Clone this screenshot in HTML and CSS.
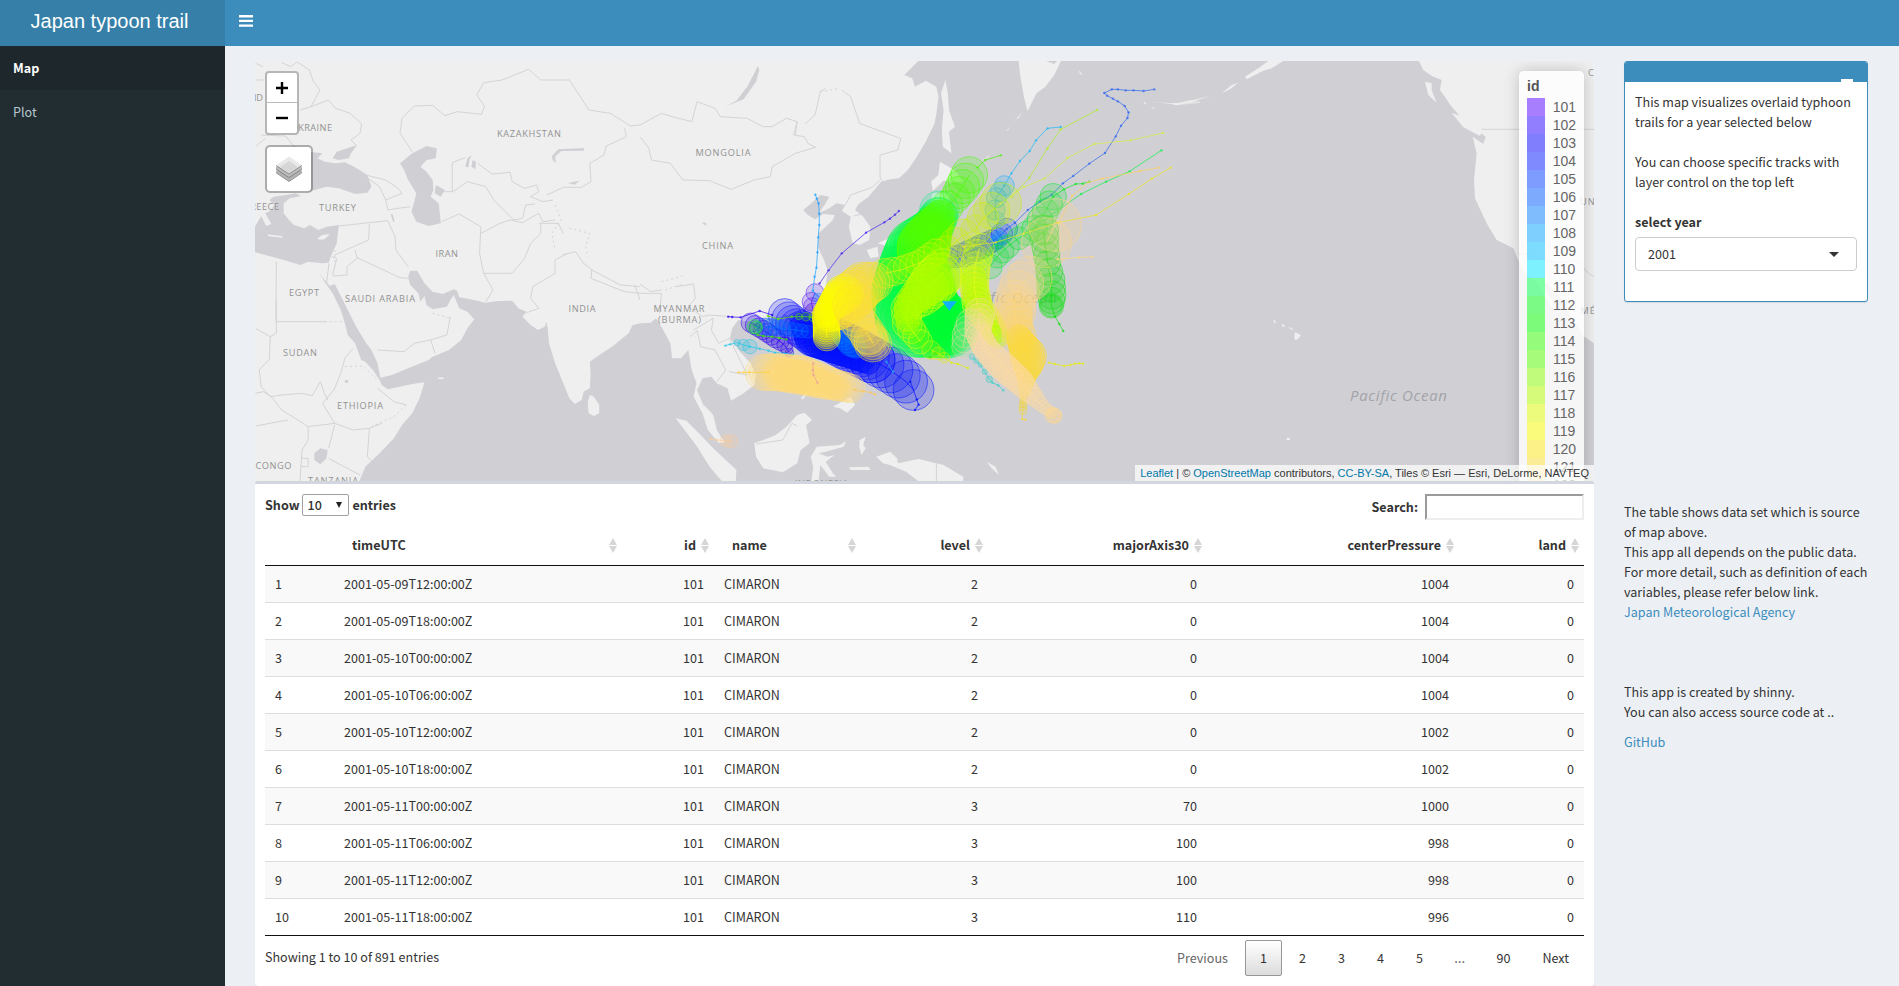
FILE: index.html
```html
<!DOCTYPE html>
<html lang="en">
<head>
<meta charset="utf-8">
<title>Japan typoon trail</title>
<link rel="stylesheet" href="styles.css">
</head>
<body>
<header class="header">
  <div class="logo">Japan typoon trail</div>
  <button class="toggle" aria-label="Toggle navigation">
    <svg width="14" height="12" viewBox="0 0 14 12"><path d="M0 0h14v2.4H0zM0 4.7h14v2.4H0zM0 9.4h14v2.4H0z" fill="#fff"/></svg>
  </button>
</header>
<div class="shell">
  <nav class="sidebar">
    <a class="nav-item active">Map</a>
    <a class="nav-item">Plot</a>
  </nav>
  <main class="content">
    <section class="primary">
      <div class="map">
        <svg class="basemap" width="1339" height="420" viewBox="255 61 1339 420">
          <rect x="255" y="61" width="1339" height="420" fill="#d0cfd4"/>
          <g transform="scale(.408163 .333333)">
            <path class="land" d="M620 180H1569V970L1550 975 1540 1000 1505 1035 1475 1060 1445 1085 1447 1120 1445 1165 1430 1175 1425 1200 1408 1212 1395 1195 1380 1150 1360 1090 1345 1030 1342 985 1338 965 1335 980 1318 990 1300 975 1280 950 1290 935 1270 925 1255 902 1220 903 1190 908 1150 897 1125 892 1120 872 1112 868 1085 882 1060 875 1040 850 1022 812 1005 812 1000 830 1005 855 1025 880 1030 905 1040 888 1045 915 1060 928 1095 920 1105 897 1112 885 1125 925 1145 935 1162 958 1145 985 1130 1020 1100 1050 1060 1070 1050 1080 1000 1105 960 1125 932 1133 925 1090 910 1050 895 1025 875 985 862 955 840 900 820 852 808 858 792 835 782 818 795 845 815 880 835 930 845 970 852 1005 870 1030 885 1080 895 1085 915 1112 930 1140 935 1155 950 1168 980 1160 1010 1152 1040 1147 1028 1195 1010 1240 985 1275 965 1315 930 1360 895 1400 880 1445H620Z"/>
            <path class="land" d="M1445 1185 1455 1190 1468 1215 1468 1240 1455 1248 1442 1240 1440 1205ZM1072 1133 1086 1132 1087 1137 1075 1137Z"/>
            <path class="sea" d="M620 755 650 765 680 775 710 785 735 795 755 785 790 790 805 788 812 765 825 730 830 675 800 680 780 690 760 675 745 685 720 675 708 660 695 640 695 610 710 595 738 588 725 580 700 585 670 590 660 600 672 615 662 632 650 640 665 672 652 678 640 648 620 690Z"/>
            <path class="land" d="M655 703 690 708 694 713 658 709ZM778 715 790 705 809 702 795 718 783 719Z"/>
            <path class="sea" d="M755 575V455L790 460 778 475 795 485 822 490 845 487 870 502 900 525 910 560 900 578 870 582 830 565 800 560ZM815 475 825 455 850 445 875 435 860 460 855 475 830 480ZM980 490 1010 460 1045 438 1070 445 1068 475 1045 480 1030 500 1045 515 1060 540 1062 570 1055 590 1075 610 1080 670 1050 678 1020 665 1008 635 1015 605 1020 580 1000 540 990 510ZM1068 555 1090 570 1080 590 1065 580ZM1145 475 1156 465 1150 480 1148 502 1140 500ZM1158 480 1166 485 1165 508 1155 500ZM1352 468 1368 448 1432 444 1430 452 1375 453 1360 470 1362 490 1354 480ZM1392 549 1420 542 1408 554ZM770 1360 785 1345 803 1350 800 1375 785 1393 770 1380ZM845 1140h8v8h-8ZM957 643l5 0 5 22-4 0Z"/>
            <path class="border" d="M690 188 712 200 728 186 758 210 768 245 784 270 762 320 805 300 822 325 858 340 886 372 882 400 860 420 872 435M626 240H645M626 190 645 200M762 320 735 330M640 405 700 408 720 440 745 450M626 440 650 415M1010 455 980 400 985 355 1015 318 1060 316 1090 347 1120 335 1180 343 1187 318 1168 285 1185 248 1230 240 1295 208 1325 240 1395 240 1443 330 1495 340 1545 378 1568 375M1530 385 1535 410 1485 438 1480 465 1445 490 1448 545 1425 562 1380 562 1340 585M1108 575V488L1140 473M1170 490 1205 522 1250 517 1255 545 1285 565 1315 555 1320 575 1300 590 1330 605 1355 600M1085 575 1110 575 1145 545 1190 560 1210 600 1258 660 1280 655 1288 615 1310 612M880 520 945 540 975 565 985 580 945 600 930 560 890 525M945 600 950 630 975 625 1005 620M830 678 905 668 950 662 968 710 970 750 1000 800M905 672 903 720 820 765M870 750 875 775 850 800 850 825 815 828M875 773 980 833 1005 835M1082 665 1125 642 1178 680 1175 760 1185 820 1208 870 1190 905M1178 700 1225 670 1250 660 1280 668 1320 640 1330 665 1360 660M1325 670 1325 700 1300 730 1285 775 1255 820 1185 820M1320 670 1368 670 1380 700M1390 760 1360 780 1360 820 1305 860 1300 895 1320 925 1290 938M1378 765 1410 755 1430 790 1450 810 1520 855 1568 860M1450 810 1448 835 1530 875 1568 880M1555 855 1568 900M806 790 800 850M813 770 825 775 815 825M677 785 676 965H800M677 900V1000L662 1010 660 1078 635 1110 640 1160 662 1190 690 1185 740 1180 765 1187 785 1145 795 1180 803 1200M626 985 662 1010M865 1045 845 1075 835 1120 818 1170 790 1210 820 1270 865 1290 905 1285 935 1270M925 1165 965 1205 995 1215M925 1050 990 1055 1015 1030 1055 1020 1095 1005 1103 950M1055 1020 1066 1060M626 1180 645 1175 665 1190 690 1230 730 1260 755 1280 820 1270M626 1278 705 1260M905 1285 900 1370 912 1385M805 1375 882 1425M820 1275 805 1345M755 1280 755 1320 740 1350 735 1443M740 1375H755V1400H738"/>
            <path class="border dotted" d="M795 965H845M845 1100 890 1098 925 1140M1060 940 1105 955M1360 615 1375 660 1352 700 1360 750M1395 685 1445 700 1435 740 1440 770M995 1215 965 1250 910 1280M820 735 820 800"/>
          </g>
          <g transform="translate(640 60) scale(.357143 .333333)">
            <path class="land" d="M0 0H782L740 45 762 55 770 80 800 62 830 80 836 110 830 160 825 190 800 245 775 290 750 330 725 355 700 358 675 365 660 385 640 410 612 432 602 450 625 470 645 500 642 540 615 555 595 548 585 500 590 470 565 452 575 435 550 430 530 445 500 460 520 430 530 410 505 405 480 430 457 450 470 465 490 478 512 462 545 465 540 480 520 500 500 520 498 560 515 600 525 630 520 680 500 710 460 745 420 765 390 770 350 775 330 790 310 785 275 780 258 805 252 835 280 875 310 910 325 945 320 975 290 1000 255 1022 245 985 215 970 200 950 175 955 160 990 175 1030 205 1065 215 1110 237 1148 220 1148 190 1110 175 1060 150 1010 158 970 145 930 135 870 115 895 90 895 85 850 60 800 45 775 30 788 0 790Z"/>
            <path class="land" d="M855 60 862 100 865 150 882 200 865 215 872 280 848 260 845 210 850 150 843 100ZM1060 0 1065 50 1075 110 1085 154 1110 100 1135 80 1160 45 1180 0ZM840 305 880 330 905 365 850 362 820 392 815 365 835 345ZM820 400 870 400 850 480 780 545 700 560 665 550 720 525 770 500 810 440ZM635 570 665 560 668 590 645 595ZM488 700 502 710 490 745 478 735ZM310 800 335 800 330 820 310 820ZM540 1040 590 1010 602 1035 580 1058 560 1045ZM450 1015 490 975 480 990 455 1018ZM320 1150 345 1140 380 1125 410 1100 440 1065 460 1058 482 1080 465 1095 475 1150 450 1170 440 1210 400 1237 345 1225 325 1190ZM100 1075 130 1082 165 1120 205 1165 240 1200 270 1230 268 1264 230 1264 195 1220 160 1160 125 1110ZM495 1160 560 1155 577 1143 570 1160 520 1175 500 1180 525 1190 545 1185 520 1205 540 1240 550 1250 530 1250 505 1215 500 1264 480 1264 485 1220 478 1190ZM615 1140 632 1130 625 1155 632 1165 620 1185 614 1160ZM585 1222 640 1220 645 1230 590 1230ZM662 1190 700 1175 720 1195 722 1210 780 1197 850 1215 905 1250 905 1264 780 1264 745 1235 700 1215 680 1210ZM1228 30 1240 45 1232 42ZM955 302 980 285 975 292ZM1130 0h40l-10 12ZM970 1205l25 15 10 25-20-20Z"/>
            <path class="land faint" d="M1050 180l14-18 6-10-8 22ZM1025 212l12-14-6 14ZM1315 100l30 3M1430 125l70 5 40-10 28 5v4l-60 6Z"/>
            <path class="sea" d="M330 18 334 30 325 65 290 118 238 140 270 122 300 80 320 40ZM172 488 185 488 186 498Z"/>
            <path class="border" d="M0 195 60 160 90 170 145 185 160 125 210 145 225 170 300 175 345 200 370 200 410 175 440 185 430 225 460 230 470 250 492 262 435 280 370 320 365 350 320 360 255 388 195 362 120 360 85 310 32 300 25 265 0 230M440 185 435 225M462 192 490 165 505 95 520 85M565 90 590 110 615 190 665 210 730 235 722 270 672 285V350L678 365M575 435 590 405 650 382 672 360M598 468 622 462M0 672 30 695 60 690M100 680 150 672 155 715 135 740 175 770 195 765 250 770M150 810 205 775 200 810 220 850 250 835 280 900 300 945 250 935M140 830 160 812 170 860 210 870 240 930 215 965M0 700 60 700 55 760M325 1152 400 1140 425 1090 440 1098M830 1210V1264M175 1035 190 1040"/>
            <path class="border dotted" d="M60 665 120 648M70 690 120 672M505 95 560 85"/>
          </g>
          <g transform="translate(1130 40) scale(.333333)">
            <path class="land" d="M865 60H1395V912L1360 888 1330 840 1290 770 1250 730 1240 735 1270 790 1285 825 1260 795 1220 730 1180 695 1165 660 1150 625 1100 600 1070 550 1035 475 1032 420 1040 340 1028 290 1060 312 1067 290 1000 240 965 200 930 150 935 120 905 108 880 90Z"/>
            <path class="land" d="M885 125 905 130 905 150 920 188 895 165ZM965 218 1010 235 1055 275 1050 288 1000 262ZM415 63H460L425 85 400 92 350 118 345 110 385 85ZM275 160 305 135 325 128 300 148ZM115 190 150 190 190 180 240 168 185 186 140 196ZM40 185l10 5-6 3ZM62 200l12 4-4 3ZM78 182l6 6ZM430 840l6 2 2 6-6 0ZM455 852l8 2 1 6-6 0ZM475 860l10 4 6 7-8-3ZM495 876l18 10-10 12-8 2-2-10ZM470 1193l10 1v6h-10Z"/>
            <path class="border" d="M1055 268H1395M1165 640 1195 642 1255 665 1310 665 1325 660 1350 672 1375 700 1395 712"/>
          </g>
          <g class="labels">
            <text x="226" y="100.500" textLength="38">POLAND</text>
            <text x="291" y="130.500" textLength="42">UKRAINE</text>
            <text x="497" y="136.500" textLength="65">KAZAKHSTAN</text>
            <text x="319" y="211" textLength="38">TURKEY</text>
            <text x="243" y="210" textLength="37">GREECE</text>
            <text x="435.500" y="256.500" textLength="23.500">IRAN</text>
            <text x="289" y="296" textLength="31">EGYPT</text>
            <text x="345" y="302" textLength="71">SAUDI ARABIA</text>
            <text x="568.500" y="312" textLength="28">INDIA</text>
            <text x="283" y="356" textLength="35">SUDAN</text>
            <text x="337" y="409" textLength="47">ETHIOPIA</text>
            <text x="255.500" y="469" textLength="37">CONGO</text>
            <text x="308" y="484" textLength="51">TANZANIA</text>
            <text x="695.500" y="156" textLength="56">MONGOLIA</text>
            <text x="702" y="249" textLength="32">CHINA</text>
            <text x="653.500" y="312" textLength="52">MYANMAR</text>
            <text x="658" y="323" textLength="44">(BURMA)</text>
            <text x="914" y="222" textLength="30">JAPAN</text>
            <text x="795" y="487" textLength="54">INDONESIA</text>
            <text x="1588" y="76">CANADA</text>
            <text x="1580" y="205">UNITED</text>
            <text x="1580.500" y="313.500">MÉXICO</text>
            <text class="ocean" x="960" y="303" textLength="98">Pacific Ocean</text>
            <text class="ocean" x="1350" y="401" textLength="98">Pacific Ocean</text>
          </g>
          <g id="tracks" transform="translate(640 60) scale(.357143 .333333)"></g>
        </svg>
        <div class="controls">
          <div class="zoom">
            <button aria-label="Zoom in"><svg width="12" height="12" viewBox="0 0 12 12"><path d="M0 6h12M6 0v12" stroke="#000" stroke-width="2.400"/></svg></button>
            <button aria-label="Zoom out"><svg width="12" height="12" viewBox="0 0 12 12"><path d="M0 6h12" stroke="#000" stroke-width="2.400"/></svg></button>
          </div>
          <button class="layers" aria-label="Layers">
            <svg width="26" height="26" viewBox="0 0 26 26">
              <path d="M0 16.500 13 25.500 26 16.500V15L13 8 0 15Z" fill="#b2b2b2"/>
              <path d="M0 16.700 13 25.500 26 16.700" fill="none" stroke="#949494"/>
              <path d="M0 13 13 22 26 13V11H0Z" fill="#bdbdbd"/>
              <path d="M0 13 13 21.500 26 13" fill="none" stroke="#858585"/>
              <path d="M0 9.300 13 0.500 26 9.300 13 18Z" fill="#e9e9e9"/>
              <path d="M4 11 13 5 22 11 13 17Z" fill="#d6d6d6"/>
              <path d="M0 9.500 13 18 26 9.500" fill="none" stroke="#8a8a8a"/>
            </svg>
          </button>
        </div>
        <div class="legend"><strong>id</strong><div id="legend-items"></div></div>
        <div class="attribution"><a>Leaflet</a> | © <a>OpenStreetMap</a> contributors, <a>CC-BY-SA</a>, Tiles © Esri — Esri, DeLorme, NAVTEQ</div>
      </div>
      <div class="box">
        <div class="table-tools">
          <label class="length">Show <span class="length-select">10<i></i></span> entries</label>
          <label class="search">Search:<input type="text"></label>
        </div>
        <table class="data">
          <colgroup><col class="c0"><col class="c1"><col class="c2"><col class="c3"><col class="c4"><col class="c5"><col class="c6"><col class="c7"></colgroup>
          <thead><tr>
            <th></th><th class="sort">timeUTC</th><th class="sort num">id</th><th class="sort">name</th><th class="sort num">level</th><th class="sort num">majorAxis30</th><th class="sort num">centerPressure</th><th class="sort num">land</th>
          </tr></thead>
          <tbody>
            <tr><td>1</td><td>2001-05-09T12:00:00Z</td><td class="num">101</td><td>CIMARON</td><td class="num">2</td><td class="num">0</td><td class="num">1004</td><td class="num">0</td></tr>
            <tr><td>2</td><td>2001-05-09T18:00:00Z</td><td class="num">101</td><td>CIMARON</td><td class="num">2</td><td class="num">0</td><td class="num">1004</td><td class="num">0</td></tr>
            <tr><td>3</td><td>2001-05-10T00:00:00Z</td><td class="num">101</td><td>CIMARON</td><td class="num">2</td><td class="num">0</td><td class="num">1004</td><td class="num">0</td></tr>
            <tr><td>4</td><td>2001-05-10T06:00:00Z</td><td class="num">101</td><td>CIMARON</td><td class="num">2</td><td class="num">0</td><td class="num">1004</td><td class="num">0</td></tr>
            <tr><td>5</td><td>2001-05-10T12:00:00Z</td><td class="num">101</td><td>CIMARON</td><td class="num">2</td><td class="num">0</td><td class="num">1002</td><td class="num">0</td></tr>
            <tr><td>6</td><td>2001-05-10T18:00:00Z</td><td class="num">101</td><td>CIMARON</td><td class="num">2</td><td class="num">0</td><td class="num">1002</td><td class="num">0</td></tr>
            <tr><td>7</td><td>2001-05-11T00:00:00Z</td><td class="num">101</td><td>CIMARON</td><td class="num">3</td><td class="num">70</td><td class="num">1000</td><td class="num">0</td></tr>
            <tr><td>8</td><td>2001-05-11T06:00:00Z</td><td class="num">101</td><td>CIMARON</td><td class="num">3</td><td class="num">100</td><td class="num">998</td><td class="num">0</td></tr>
            <tr><td>9</td><td>2001-05-11T12:00:00Z</td><td class="num">101</td><td>CIMARON</td><td class="num">3</td><td class="num">100</td><td class="num">998</td><td class="num">0</td></tr>
            <tr><td>10</td><td>2001-05-11T18:00:00Z</td><td class="num">101</td><td>CIMARON</td><td class="num">3</td><td class="num">110</td><td class="num">996</td><td class="num">0</td></tr>
          </tbody>
        </table>
        <div class="table-foot">
          <div class="info">Showing 1 to 10 of 891 entries</div>
          <div class="pages"><a class="page muted">Previous</a><a class="page current">1</a><a class="page">2</a><a class="page">3</a><a class="page">4</a><a class="page">5</a><span class="ellipsis">…</span><a class="page">90</a><a class="page">Next</a></div>
        </div>
      </div>
    </section>
    <aside class="side">
      <div class="panel">
        <div class="panel-head"><span class="collapse"></span></div>
        <div class="panel-body">
          <p>This map visualizes overlaid typhoon<br>trails for a year selected below</p>
          <p>You can choose specific tracks with<br>layer control on the top left</p>
          <label>select year</label>
          <div class="year">2001<i></i></div>
        </div>
      </div>
      <div class="notes">
        <p>The table shows data set which is source<br>of map above.<br>This app all depends on the public data.<br>For more detail, such as definition of each<br>variables, please refer below link.<br><a>Japan Meteorological Agency</a></p>
        <p class="credit">This app is created by shinny.<br>You can also access source code at ..</p>
        <p class="repo"><a>GitHub</a></p>
      </div>
    </aside>
  </main>
</div>
<script src="map.js"></script>
</body>
</html>
```
FILE: styles.css
```css
* { box-sizing: border-box; }
html { background: #ecf0f5; }
body { margin: 0; height: 986px; overflow: hidden; font-family: "Noto Sans CJK JP", "Open Sans", sans-serif; font-size: 12.57px; line-height: 20px; color: #333; display: flex; flex-direction: column; }
a { color: #3c8dbc; text-decoration: none; }
p { margin: 0; }
button { border: 0; padding: 0; background: none; font: inherit; }
svg { display: block; }

.header { display: flex; flex: none; height: 46px; background: #3c8dbc; }
.logo { width: 225px; padding: 0 6px 4px 0; display: flex; align-items: center; justify-content: center; background: #367fa9; color: #fff; font: 20px "Liberation Sans", sans-serif; white-space: nowrap; }
.toggle { margin: 15px 0 0 14px; height: 12px; }

.shell { display: flex; flex: 1; min-height: 0; }
.sidebar { width: 225px; flex: none; background: #222d32; }
.nav-item { display: block; height: 44px; padding: 12px 13px; color: #b8c7ce; }
.nav-item.active { background: #1e282c; color: #fff; font-weight: 700; }
.content { display: grid; grid-template-columns: 1339px 244px; column-gap: 30px; padding: 15px 30px 0; align-content: start; }

.map { position: relative; height: 420px; overflow: hidden; }
.land { fill: #efefef; }
.faint { opacity: .6; }
.sea { fill: #d0cfd4; }
.border { fill: none; stroke: #d4d4d6; stroke-width: 1px; vector-effect: non-scaling-stroke; }
.dotted { stroke-dasharray: 2 3; }
.labels text { font: 9.2px "Open Sans", sans-serif; letter-spacing: 1px; fill: #929292; }
.labels .ocean { font: italic 15px "Open Sans", sans-serif; fill: #a3a3a8; }

.controls { position: absolute; left: 10px; top: 10px; display: flex; flex-direction: column; align-items: flex-start; gap: 10px; }
.zoom { width: 34px; border: 2px solid rgba(0,0,0,.24); border-radius: 4px; background: #fff; background-clip: padding-box; }
.zoom button, .layers { display: flex; align-items: center; justify-content: center; }
.zoom button { width: 30px; height: 30px; }
.zoom button:first-child { border-bottom: 1px solid #bbb; }
.layers { width: 48px; height: 48px; border: 2px solid rgba(0,0,0,.28); border-radius: 5px; background: #fff; background-clip: padding-box; }

.legend { position: absolute; right: 10px; top: 10px; width: 65px; padding: 6px 8px; background: rgba(255,255,255,.8); box-shadow: 0 0 15px rgba(0,0,0,.2); border-radius: 5px; font: 14px/18px "Liberation Sans", sans-serif; color: #666; }
.legend strong { display: block; height: 21px; color: #555; }
.legend-row { display: flex; gap: 8px; height: 18px; }
.swatch { width: 18px; height: 18px; opacity: .5; }
.attribution { position: absolute; right: 0; bottom: 0; height: 16px; padding: 0 5px; background: rgba(255,255,255,.7); font: 11px/16px "Liberation Sans", sans-serif; color: #333; white-space: nowrap; }
.attribution a { color: #0078a8; }

.box { height: 505px; padding: 10px; background: #fff; border-top: 3px solid #d2d6de; border-radius: 3px; box-shadow: 0 1px 1px rgba(0,0,0,.1); }
.table-tools { display: flex; justify-content: space-between; align-items: flex-start; height: 31px; font-weight: 700; white-space: nowrap; }
.length { display: flex; align-items: center; gap: 3px; height: 22px; }
.length-select { display: flex; align-items: center; justify-content: space-between; width: 47px; height: 22px; padding: 0 6px 0 4px; border: 1px solid #a0a0a0; border-radius: 2px; font-weight: 500; }
.length-select i { border: 3px solid transparent; border-top: 6px solid #222; border-bottom: 0; }
.search { display: flex; align-items: center; gap: 7px; height: 26px; }
.search input { width: 159px; height: 26px; border: 2px solid; border-color: #9a9a9a #eee #eee #9a9a9a; background: #fff; }

.data { width: 1319px; table-layout: fixed; border-collapse: separate; border-spacing: 0; border-bottom: 1px solid #111; }
.c0 { width: 69px; } .c1 { width: 288px; } .c2 { width: 92px; } .c3 { width: 147px; }
.c4 { width: 127px; } .c5 { width: 219px; } .c6 { width: 252px; } .c7 { width: 125px; }
.data th { position: relative; height: 41px; padding: 10px 18px; border-bottom: 1px solid #111; text-align: left; white-space: nowrap; }
.data td { height: 37px; padding: 8px 10px; border-top: 1px solid #ddd; }
.data tbody tr:first-child td { border-top: 0; height: 36px; }
.data tbody tr:nth-child(odd) { background: #f9f9f9; }
.data .num { text-align: right; }
.sort::before, .sort::after { content: ""; position: absolute; right: 5px; border: 4px solid transparent; }
.sort::before { top: 13px; border-top: 0; border-bottom: 7px solid #d6d6d6; }
.sort::after { top: 21px; border-bottom: 0; border-top: 7px solid #d6d6d6; }

.table-foot { display: flex; justify-content: space-between; padding-top: 4px; }
.info { padding-top: 7px; }
.pages { display: flex; gap: 2px; }
.page { min-width: 37px; height: 36px; padding: 7px 14px; border: 1px solid transparent; border-radius: 2px; color: #333; text-align: center; }
.page.muted { color: #666; }
.page.current { border-color: #979797; background: linear-gradient(#fff, #dcdcdc); }
.ellipsis { width: 39.5px; padding: 8px 0; color: #666; font-family: "Open Sans", sans-serif; font-size: 14px; text-align: center; }

.panel { height: 241px; overflow: hidden; border: 1px solid #3c8dbc; border-radius: 3px; background: #fff; box-shadow: 0 1px 1px rgba(0,0,0,.1); }
.panel-head { display: flex; justify-content: flex-end; align-items: flex-end; height: 20px; padding-right: 14px; background: #3c8dbc; }
.collapse { width: 12px; height: 3px; background: #fff; }
.panel-body { padding: 10px; white-space: nowrap; }
.panel-body p { margin-bottom: 20px; }
.panel-body label { display: block; margin-bottom: 5px; font-weight: 700; }
.year { display: flex; align-items: center; justify-content: space-between; height: 34px; padding: 0 17px 0 12px; border: 1px solid #ccc; border-radius: 4px; }
.year i { border: 5px solid transparent; border-top-color: #333; border-bottom: 0; }
.notes { padding-top: 200px; white-space: nowrap; }
.credit { margin-top: 60px; }
.repo { margin-top: 10px; }
```
FILE: map.js
```js
const palette = ['#5000ff', '#2600ff', '#0600ff', '#0018ff', '#003cff', '#0058ff', '#007cff', '#00a0ff', '#00beff', '#00e6ff',
  '#00ff4c', '#00ff16', '#02ff00', '#32ff00', '#58ff00', '#8cff00', '#b6ff00', '#e2ff00', '#ffff00', '#ffec16', '#ffe135', '#ffd960'];
document.getElementById('legend-items').innerHTML = palette.map((c, i) =>
  `<div class="legend-row"><span class="swatch" style="background:${c}"></span>${101 + i}</div>`).join('');

// Each track: colour (or fill|stroke), spacing between wind circles, then x, y, radius triples.
const tracks = [
  ['#4a20f0', 22, 725,453,0, 714,464,0, 700,476,0, 684,487,0, 633,518,0, 565,580,0, 528,631,0, 503,670,0],
  ['#5010f0', 20, 490,698,25, 480,725,26, 485,755,24],
  ['#0a10ff', 18, 405,765,46, 440,800,50, 480,825,56, 540,840,64, 600,872,66, 650,900,64],
  ['#0010ff', 8, 450,790,30, 480,840,45, 560,870,42, 640,910,30],
  ['#0010ff', 26, 650,900,64, 700,930,64, 745,965,60, 766,990,57],
  ['#0010ff', 22, 757,965,0, 775,1018,0, 780,1034,0, 770,1050,0],
  ['#3000f0', 22, 247,770,0, 258,771,0, 282,772,0, 335,753,0, 370,765,0],
  ['#2a00f0', 13, 310,788,27, 345,810,27, 380,835,27, 405,855,22, 418,878,12],
  ['#3068f0', 30, 1440,88,0, 1410,93,0, 1382,91,0, 1360,91,0, 1338,88,0, 1321,88,0, 1300,99,0, 1308,107,0, 1324,116,0, 1338,124,0, 1357,138,0, 1368,157,0, 1365,174,0, 1347,197,0, 1332,229,0, 1302,279,0, 1258,311,0, 1213,348,0, 1184,370,0, 1153,404,0, 1120,425,0, 1086,450,0, 1050,488,0, 1027,507,0],
  ['#1050f0', 18, 1027,507,30, 1000,535,30, 955,560,34, 905,585,34, 865,595,28],
  ['#18a0ff', 20, 491,404,0, 495,416,0, 500,430,0, 502,461,0, 502,495,0, 499,532,0, 497,577,0, 494,623,0, 489,650,0, 484,692,0, 500,715,14],
  ['#0070ff', 17, 350,800,24, 400,805,22, 470,815,18],
  ['#0078ff', 10, 560,825,24, 590,850,36, 605,862,30],
  ['#20a8f8', 20, 690,905,0, 708,935,0],
  ['#20b8f8', 30, 1178,201,0, 1141,205,0, 1109,241,0, 1091,273,0, 1064,303,0, 1040,340,0, 1020,377,0],
  ['#10b0f8', 26, 1020,377,28, 998,413,28, 994,450,28, 997,480,24],
  ['#0098ff', 10, 1005,535,20, 1002,545,18],
  ['#20c8e8', 16, 239,857,0, 252,853,0, 272,848,9, 290,855,16, 308,860,20],
  ['#20c8e8', 20, 308,860,0, 335,866,0, 360,872,0, 378,878,0, 404,880,0, 428,884,0],
  ['#10f090', 18, 838,452,55, 836,470,54],
  ['#00ff48', 12, 836,470,52, 815,510,60, 770,565,80, 765,620,95, 766,700,118, 775,765,118, 820,785,100, 860,800,88],
  ['#00ff30', 8, 800,700,80, 830,790,85, 860,800,80],
  ['#10f048', 28, 1460,271,0, 1371,334,0, 1305,365,0, 1235,402,0, 1080,520,0],
  ['#10e820', 28, 1258,365,0, 1240,371,0, 1220,372,0, 1187,388,0, 1157,410,0],
  ['#10e830', 28, 1157,410,37, 1135,455,37, 1105,505,36, 1060,535,32, 1030,560,32, 1000,590,32, 980,620,34],
  ['#10e010', 22, 1130,510,42, 1135,560,38, 1142,610,36, 1150,660,40, 1153,705,40, 1152,738,34],
  ['#10e010', 25, 1152,738,30, 1162,770,0, 1174,792,0, 1185,813,0],
  ['#10ff20', 9, 320,800,20, 325,803,18],
  ['#38e800', 25, 330,825,0, 345,828,0, 370,830,0, 390,834,0, 410,838,0],
  ['#58e800', 25, 358,768,0, 387,777,0, 425,770,0, 445,770,9, 465,770,12, 485,772,12],
  ['#50f000', 25, 945,322,0, 967,300,0, 1010,286,0],
  ['#44ff00', 24, 922,345,51, 903,380,48, 882,415,42, 860,440,45],
  ['#54ff00', 8, 840,465,42, 815,510,58, 795,555,74, 790,575,70],
  ['#b0f020', 25, 1280,150,0, 1178,208,0, 1141,265,0, 1090,354,0, 1040,410,0],
  ['#c8f000', 34, 1010,430,58, 960,475,44, 940,510,42, 905,525,45, 860,570,40],
  ['#a0ff00|#e8f010', 20, 686,640,42, 730,630,38, 780,610,36, 830,575,36],
  ['#b0ff00|#e8ff10', 20, 850,635,64, 825,665,66, 790,705,58, 745,745,42, 748,790,42, 785,845,34],
  ['#b0ff00', 9, 850,640,58, 800,685,52, 745,745,34, 750,790,32],
  ['#e0f000', 20, 815,870,26, 835,880,18, 852,893,15, 872,908,0, 890,912,0, 918,924,0],
  ['#50e000', 20, 812,892,0, 828,880,0],
  ['#d8f040', 30, 1465,219,0, 1374,241,0, 1272,252,0, 1197,294,0, 1132,356,0, 1075,381,0, 1010,430,0],
  ['#b8ff00', 14, 936,650,32, 938,690,36, 950,750,36, 1000,828,30],
  ['#c0ff00|#e8f820', 17, 950,565,42, 938,620,42, 936,680,40, 945,740,42, 980,790,38, 1000,828,34],
  ['#f0e820', 30, 1486,323,0, 1433,356,0, 1369,402,0, 1277,465,0, 1170,488,0, 1074,521,0, 996,547,0, 905,560,0],
  ['#ffe228', 14, 655,665,54, 625,675,64, 590,712,68, 555,745,60, 530,770,42],
  ['#ffff00', 7, 570,702,54, 540,735,42, 518,765,36, 522,800,37, 523,832,38],
  ['#ffe030', 20, 600,735,60, 605,775,52, 630,810,50, 652,850,52],
  ['#ffe040', 14, 640,830,48, 652,850,46],
  ['#ffdb80', 11, 345,937,50, 390,937,52, 450,945,54, 520,968,46, 590,985,40],
  ['#ffdb78', 9, 390,940,45, 450,950,45, 560,985,30],
  ['#ffd040', 25, 275,937,0, 290,937,0, 305,937,0, 360,937,0],
  ['#ffc850', 25, 600,990,0, 625,994,0, 645,997,0, 658,1003,0],
  ['#ffd060', 22, 1452,323,0, 1400,333,0, 1295,356,0, 1255,367,0, 1210,408,0, 1172,490,0],
  ['#ffd888', 48, 1162,495,74, 1138,548,70],
  ['#ffd888', 22, 1092,655,62, 1070,670,60, 1050,720,56, 1050,755,58],
  ['#ffd870', 14, 1048,755,50, 1055,800,44, 1062,830,48],
  ['#ffdc38', 9, 1060,830,34, 1088,888,50, 1086,915,42, 1083,940,30],
  ['#ffd880', 25, 1170,598,0, 1230,592,0, 1267,591,0],
  ['#e8f010', 25, 1145,908,0, 1161,912,0, 1188,918,0, 1205,915,0, 1218,911,0, 1230,910,0, 1241,911,0],
  ['#f4d840', 10, 1083,940,30, 1078,990,17, 1073,1015,8, 1072,1040,11, 1072,1052,11, 1070,1077,0, 1080,1079,0],
  ['#90e898|#e8dca0', 18, 905,860,32, 910,825,36, 925,790,40],
  ['#30d0c8', 20, 930,890,8, 953,915,6, 965,935,7, 978,958,9, 987,968,0, 1003,976,0, 1017,991,0],
  ['#ffdca0', 13, 952,760,42, 945,815,36, 970,870,36, 1017,920,40, 1060,960,38, 1083,988,32, 1129,1040,18, 1155,1060,14],
  ['#ffd890', 5, 1155,1065,22, 1162,1068,20],
  ['#ffcc98', 14, 198,1137,0, 215,1140,0, 240,1142,16, 255,1144,18],
  ['#e8a0a0', 25, 485,910,0, 484,930,0, 486,945,0, 497,968,0]
];

let svg = '';
for (const [color, gap, ...v] of tracks) {
  const [fill, stroke = fill] = color.split('|');
  const pts = [];
  for (let i = 0; i < v.length; i += 3) pts.push(v.slice(i, i + 3));
  pts.forEach(([x, y, r], i) => {
    if (r) {
      const n = pts[i + 1];
      const steps = n && n[2] ? Math.max(1, Math.round(Math.hypot(n[0] - x, n[1] - y) / gap)) : 1;
      for (let s = 0; s < steps; s++) {
        const t = s / steps, q = n && n[2] ? n : [x, y, r];
        const cr = r + (q[2] - r) * t;
        svg += `<ellipse cx="${x + (q[0] - x) * t}" cy="${y + (q[1] - y) * t}" rx="${cr}" ry="${cr * 1.0714}" fill="${fill}" fill-opacity=".2" stroke="${stroke}" stroke-opacity=".5" vector-effect="non-scaling-stroke"/>`;
      }
    } else {
      svg += `<ellipse cx="${x}" cy="${y}" rx="3.400" ry="3.600" fill="${fill}" fill-opacity=".75"/>`;
    }
  });
  svg += `<polyline points="${pts.map(p => p[0] + ',' + p[1]).join(' ')}" fill="none" stroke="${stroke}" stroke-opacity=".7" vector-effect="non-scaling-stroke"/>`;
}
svg += '<path d="M846 724H887L866 752Z" fill="#10b0ff"/>';
document.getElementById('tracks').innerHTML = svg;
```
